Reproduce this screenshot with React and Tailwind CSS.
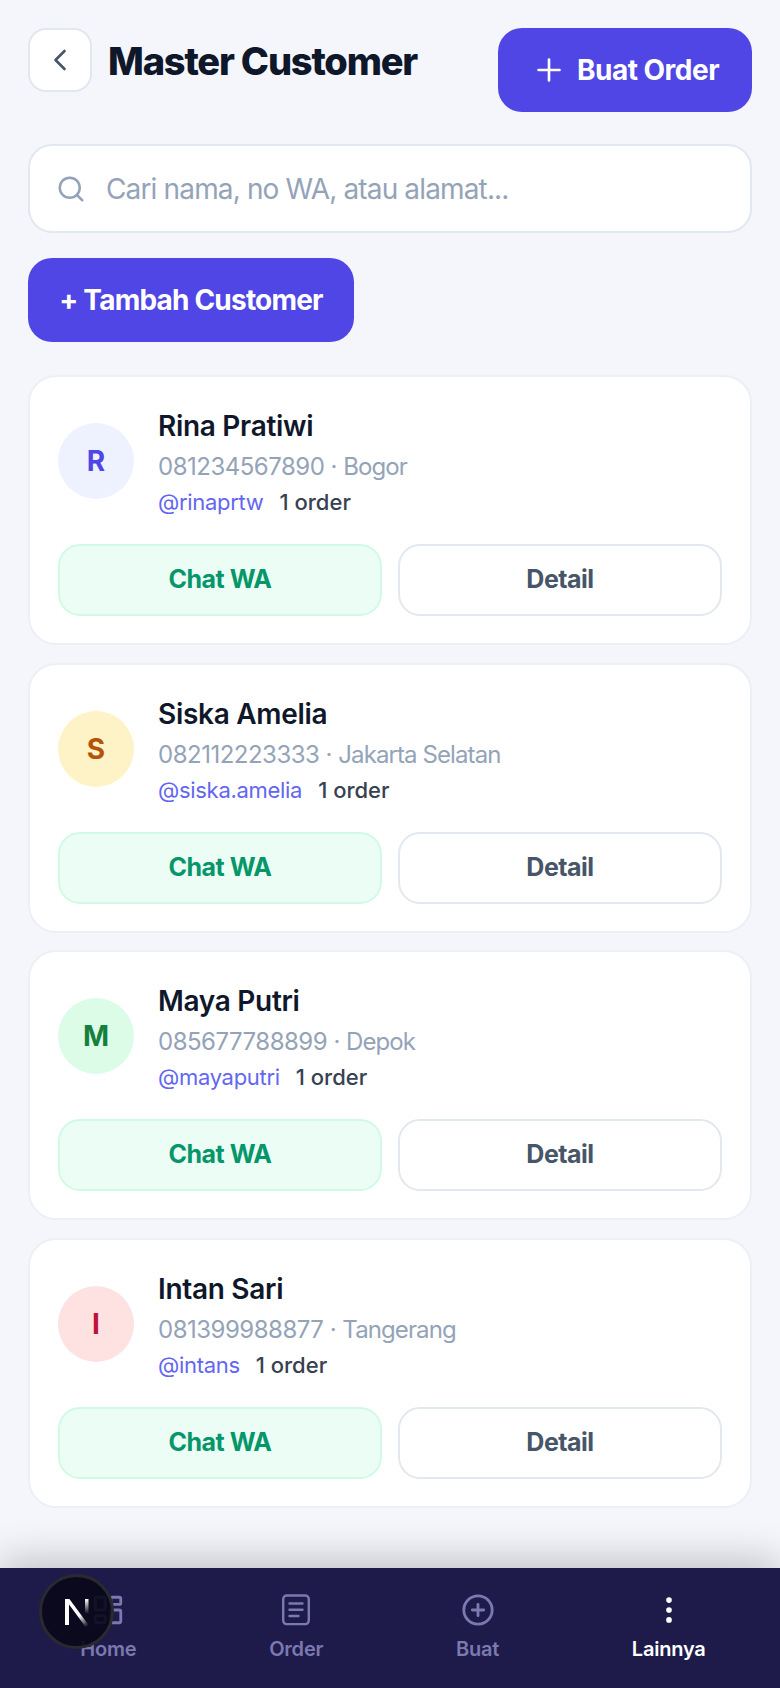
import React from 'react';
import { ChevronLeft, Plus, Search, CirclePlus, EllipsisVertical, LayoutDashboard } from 'lucide-react';

const customers = [
  { name: 'Rina Pratiwi', phone: '081234567890', city: 'Bogor', handle: '@rinaprtw', initial: 'R', avatar: 'bg-[#eef2ff] text-[#4f46e5]' },
  { name: 'Siska Amelia', phone: '082112223333', city: 'Jakarta Selatan', handle: '@siska.amelia', initial: 'S', avatar: 'bg-[#fef3c7] text-[#b45309]' },
  { name: 'Maya Putri', phone: '085677788899', city: 'Depok', handle: '@mayaputri', initial: 'M', avatar: 'bg-[#dcfce7] text-[#15803d]' },
  { name: 'Intan Sari', phone: '081399988877', city: 'Tangerang', handle: '@intans', initial: 'I', avatar: 'bg-[#fee2e2] text-[#be123c]' },
];

const OrderIcon = () => (
  <svg width="34" height="34" viewBox="0 0 34 34" fill="none" stroke="currentColor" strokeWidth="2.4" strokeLinecap="round">
    <rect x="4.2" y="2.5" width="25.6" height="28.6" rx="3.5" />
    <path d="M10.5 10.5h13M10.5 16.8h13M10.5 23h9" />
  </svg>
);

const CustomerCard = ({ customer }) => (
  <div className="bg-white border-2 border-[#eceff6] rounded-[28px] px-[28px] pt-[26px] pb-[27px]">
    <div className="flex items-center gap-[24px]">
      <div className={`w-[76px] h-[76px] rounded-full flex items-center justify-center text-[28px] font-bold ${customer.avatar}`}>
        {customer.initial}
      </div>
      <div>
        <div className="text-[28px] leading-[46px] font-semibold text-[#0f172a] tracking-[-0.3px]">{customer.name}</div>
        <div className="text-[24px] leading-[36px] text-[#94a3b8] tracking-[-0.5px]">
          {customer.phone} · <span className="tracking-[-0.9px]">{customer.city}</span>
        </div>
        <div className="flex gap-[16px] text-[22px] leading-[34px]">
          <span className="text-[#6366f1] tracking-[-0.3px]">{customer.handle}</span>
          <span className="font-medium text-[#374151]">1 order</span>
        </div>
      </div>
    </div>
    <div className="flex gap-[16px] mt-[25px]">
      <button className="flex-1 h-[72px] rounded-[22px] border-2 border-[#d1fae5] bg-[#ecfdf5] text-[#059669] text-[25px] font-bold tracking-[-0.5px]">
        Chat WA
      </button>
      <button className="flex-1 h-[72px] rounded-[22px] border-2 border-[#e2e8f0] bg-white text-[#475569] text-[25px] font-bold tracking-[-0.5px]">
        Detail
      </button>
    </div>
  </div>
);

const NavItem = ({ icon: Icon, label, active }) => (
  <div className={`flex flex-col items-center gap-[9px] ${active ? 'text-white' : 'text-[#7c78b0]'}`}>
    <Icon size={34} strokeWidth={2} />
    <span className="text-[20px] leading-[26px] font-semibold tracking-[-0.2px]">{label}</span>
  </div>
);

export default function App() {
  return (
    <div className="relative w-[780px] h-[1688px] overflow-hidden bg-[#f4f6fb] font-['Inter',sans-serif] flex flex-col">
      <div className="flex-1 px-[28px] pt-[28px]">
        <div className="flex items-start justify-between">
          <div className="flex items-center gap-[16px]">
            <button className="w-[64px] h-[64px] rounded-[18px] border-2 border-[#e2e8f0] bg-white flex items-center justify-center text-[#475569]">
              <ChevronLeft size={36} strokeWidth={1.75} />
            </button>
            <h1 className="pt-[3px] text-[38px] font-extrabold text-[#0f172a] tracking-[-1.2px]">Master Customer</h1>
          </div>
          <button className="h-[84px] w-[254px] rounded-[24px] bg-[#4f46e5] text-white flex items-center justify-center gap-[10px] text-[28px] font-bold tracking-[-0.5px]">
            <Plus size={36} strokeWidth={1.75} />
            Buat Order
          </button>
        </div>

        <div className="mt-[32px] h-[89px] rounded-[24px] border-2 border-[#e2e8f0] bg-white flex items-center px-[26px] gap-[20px]">
          <Search size={30} strokeWidth={2} className="text-[#94a3b8]" />
          <span className="text-[28px] text-[#94a3b8] tracking-[-0.85px]">Cari nama, no WA, atau alamat...</span>
        </div>

        <button className="mt-[25px] h-[84px] w-[326px] rounded-[24px] bg-[#4f46e5] text-white text-[28px] font-bold tracking-[-0.8px]">
          + Tambah Customer
        </button>

        <div className="mt-[33px] flex flex-col gap-[17.5px]">
          {customers.map((customer) => (
            <CustomerCard key={customer.name} customer={customer} />
          ))}
        </div>
      </div>

      <nav className="h-[120px] bg-[#1e1b4b] flex justify-around pl-[14px] pr-[8px] pt-[25px] shadow-[0_-8px_40px_rgba(0,0,0,0.22)]">
        <NavItem icon={LayoutDashboard} label="Home" />
        <NavItem icon={OrderIcon} label="Order" />
        <NavItem icon={CirclePlus} label="Buat" />
        <NavItem icon={EllipsisVertical} label="Lainnya" active />
      </nav>

      {/* dev-tools badge floating over the nav */}
      <div className="absolute left-[39px] top-[1574px] w-[75px] h-[75px] rounded-full bg-[#08081a]/90 border-[3px] border-[#2a2a2e] flex items-center justify-center">
        <svg width="30" height="32" viewBox="0 0 30 32" fill="none">
          <defs>
            <linearGradient id="nFade" x1="12" y1="12" x2="26" y2="30" gradientUnits="userSpaceOnUse">
              <stop offset="0.4" stopColor="#fff" />
              <stop offset="1" stopColor="#fff" stopOpacity="0" />
            </linearGradient>
            <linearGradient id="nBar" x1="25" y1="3" x2="25" y2="18" gradientUnits="userSpaceOnUse">
              <stop stopColor="#fff" />
              <stop offset="1" stopColor="#fff" stopOpacity="0" />
            </linearGradient>
          </defs>
          <path d="M3 3h4v26H3z" fill="#fff" />
          <path d="M3 3h4.4L28 31h-4.4z" fill="url(#nFade)" />
          <path d="M23 3h3.5v20H23z" fill="url(#nBar)" />
        </svg>
      </div>
    </div>
  );
}
